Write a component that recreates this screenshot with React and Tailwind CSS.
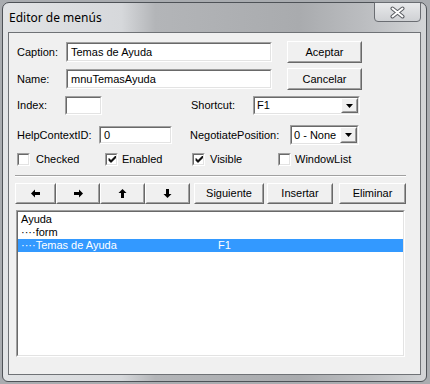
const font = { fontFamily: '"Liberation Sans", Arial, sans-serif' };

function Sunken({ className, children }) {
  return (
    <div className={`border border-t-[#a0a0a0] border-l-[#a0a0a0] border-r-white border-b-white ${className}`}>
      <div className="w-full h-full border border-t-[#696969] border-l-[#696969] border-r-[#e3e3e3] border-b-[#e3e3e3] bg-white flex items-center overflow-hidden whitespace-nowrap">
        {children}
      </div>
    </div>
  );
}

function Raised({ className, children }) {
  return (
    <div className={`border border-t-white border-l-white border-r-[#696969] border-b-[#696969] bg-[#f0f0f0] ${className}`}>
      <div className="w-full h-full border border-t-[#f0f0f0] border-l-[#f0f0f0] border-r-[#a0a0a0] border-b-[#a0a0a0] flex items-center justify-center whitespace-nowrap">
        {children}
      </div>
    </div>
  );
}

function DropArrow() {
  return (
    <Raised className="w-[17px] h-full shrink-0">
      <svg width="7" height="4" viewBox="0 0 7 4">
        <path d="M0 0h7L3.5 4z" fill="#000" />
      </svg>
    </Raised>
  );
}

function Check({ on }) {
  return (
    <Sunken className="w-[13px] h-[13px] shrink-0">
      {on && (
        <svg width="11" height="11" viewBox="0 0 11 11" className="shrink-0">
          <path d="M2 4.5l2 2 4.5-4.5v2l-4.5 4.5-2-2z" fill="#000" stroke="#000" strokeWidth="0.8" />
        </svg>
      )}
    </Sunken>
  );
}

function Arrow({ dir }) {
  const paths = {
    left: 'M0 4.5L4 0.5v2.5h5v3H4v2.5z',
    right: 'M9 4.5L5 0.5v2.5H0v3h5v2.5z',
    up: 'M4.5 0L8.5 4H6v5H3V4H0.5z',
    down: 'M4.5 9L8.5 5H6V0H3v5H0.5z',
  };
  return (
    <svg width="9" height="9" viewBox="0 0 9 9">
      <path d={paths[dir]} fill="#000" />
    </svg>
  );
}

export default function App() {
  return (
    <div className="w-[430px] h-[384px] bg-[#a9acb0] overflow-hidden text-[11px] text-black whitespace-nowrap" style={font}>
      <div className="ml-[2px] mt-[2px] w-[425px] h-[380px] rounded-t-[7px] rounded-b-[6px] border border-[#4e5257] bg-[linear-gradient(to_right,#e2e4e6_0%,#d6d8db_28%,#b3b5b8_36%,#a9abae_70%,#bcbec1_86%,#d3d5d7_100%)] px-[5px] flex flex-col">
        {/* title bar */}
        <div className="h-[29px] flex justify-between items-start shrink-0">
          <span className="mt-[6px] ml-[1px] text-[12px] text-black" style={{ fontFamily: '"Noto Sans", "Open Sans", sans-serif' }}>
            Editor de menús
          </span>
          <div className="w-[47px] h-[20px] -mt-px rounded-b-[4px] border border-[#6a6d72] bg-[linear-gradient(to_bottom,#e8e9eb,#cfd1d4)] flex items-center justify-center">
            <svg width="17" height="13" viewBox="0 0 17 13">
              <path d="M3.5 2.5l10 8M13.5 2.5l-10 8" stroke="#5a5d62" strokeWidth="4" strokeLinecap="round" />
              <path d="M3.5 2.5l10 8M13.5 2.5l-10 8" stroke="#ffffff" strokeWidth="2" strokeLinecap="round" />
            </svg>
          </div>
        </div>

        {/* client area */}
        <div className="w-[413px] h-[343px] border border-[#6f7276] bg-[#f0f0f0] pl-[6px] flex flex-col">
          <div className="mt-[8px] h-[22px] flex items-center">
            <span className="ml-[2px] w-[49px]">Caption:</span>
            <Sunken className="w-[206px] h-[20px]">
              <span className="pl-[3px]">Temas de Ayuda</span>
            </Sunken>
            <Raised className="ml-[15px] w-[75px] h-[22px]">Aceptar</Raised>
          </div>

          <div className="mt-[5px] h-[22px] flex items-center">
            <span className="ml-[2px] w-[49px]">Name:</span>
            <Sunken className="w-[206px] h-[20px]">
              <span className="pl-[3px]">mnuTemasAyuda</span>
            </Sunken>
            <Raised className="ml-[15px] w-[75px] h-[22px]">Cancelar</Raised>
          </div>

          <div className="mt-[6px] h-[19px] flex items-center">
            <span className="ml-[2px] w-[48px]">Index:</span>
            <Sunken className="w-[37px] h-[19px]" />
            <span className="ml-[89px] w-[62px]">Shortcut:</span>
            <Sunken className="w-[107px] h-[19px]">
              <span className="pl-[2px] flex-1">F1</span>
              <DropArrow />
            </Sunken>
          </div>

          <div className="mt-[10px] h-[20px] flex items-center">
            <span className="ml-[2px] w-[82px]">HelpContextID:</span>
            <Sunken className="w-[73px] h-[18px]">
              <span className="pl-[3px]">0</span>
            </Sunken>
            <span className="ml-[18px] w-[100px]">NegotiatePosition:</span>
            <Sunken className="w-[69px] h-[20px]">
              <span className="pl-[2px] flex-1">0 - None</span>
              <DropArrow />
            </Sunken>
          </div>

          <div className="mt-[7px] h-[14px] flex items-center">
            <div className="ml-[2px] w-[88px] flex items-center gap-[6px]">
              <Check />
              <span>Checked</span>
            </div>
            <div className="w-[87px] flex items-center gap-[4px]">
              <Check on />
              <span>Enabled</span>
            </div>
            <div className="w-[86px] flex items-center gap-[5px]">
              <Check on />
              <span>Visible</span>
            </div>
            <div className="flex items-center gap-[4px]">
              <Check />
              <span>WindowList</span>
            </div>
          </div>

          <div className="mt-[9px] w-[391px] h-[2px] border-t border-t-[#a0a0a0] border-b border-b-white" />

          <div className="mt-[6px] h-[21px] flex">
            <Raised className="w-[41px] h-full"><Arrow dir="left" /></Raised>
            <Raised className="w-[44px] h-full"><Arrow dir="right" /></Raised>
            <Raised className="w-[45px] h-full"><Arrow dir="up" /></Raised>
            <Raised className="w-[45px] h-full"><Arrow dir="down" /></Raised>
            <Raised className="ml-[4px] w-[70px] h-full">Siguiente</Raised>
            <Raised className="ml-[3px] w-[66px] h-full">Insertar</Raised>
            <Raised className="ml-[6px] w-[67px] h-full">Eliminar</Raised>
          </div>

          <Sunken className="mt-[6px] ml-px w-[389px] h-[147px]">
            <div className="w-full h-full flex flex-col pt-[1px]">
              <div className="h-[13px] leading-[13px] pl-[3px]">Ayuda</div>
              <div className="h-[13px] leading-[13px] pl-[3px]">····form</div>
              <div className="h-[13px] leading-[13px] pl-[3px] bg-[#3399ff] text-white flex">
                <span className="w-[197px]">····Temas de Ayuda</span>
                <span>F1</span>
              </div>
            </div>
          </Sunken>
        </div>
      </div>
    </div>
  );
}
